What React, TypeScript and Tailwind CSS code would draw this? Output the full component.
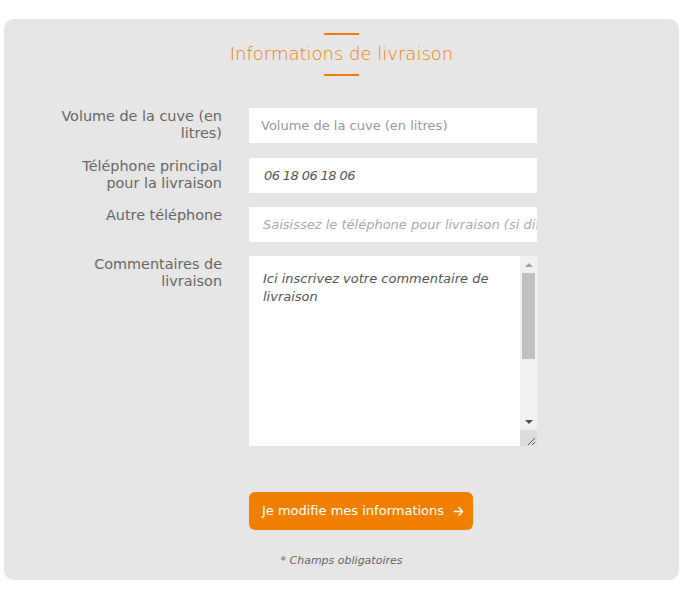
import React from 'react';

const font = { fontFamily: '"DejaVu Sans", sans-serif' };

const Row: React.FC<{ label: string; children: React.ReactNode; className?: string }> = ({ label, children, className }) => (
    <div className={`flex items-start gap-[27px] ${className ?? ''}`}>
        <label className="w-[168px] shrink-0 text-right text-[14.4px] leading-[17px] text-[#666]">{label}</label>
        {children}
    </div>
);

const App: React.FC = () => {
    return (
        <div className="min-h-[590px] bg-white pt-[19px] pl-[4px]" style={font}>
            <div className="w-[675px] h-[561px] rounded-[10px] bg-[#e6e6e6] pt-[14px] pl-[50px]">
                {/* Title */}
                <div className="flex flex-col items-center -ml-[50px]">
                    <div className="w-[35px] h-[2px] bg-[#f07f00]"></div>
                    <h2 className="mt-[7px] text-[18px] leading-[24px] font-light text-[#f07f00]">Informations de livraison</h2>
                    <div className="mt-[8px] w-[35px] h-[2px] bg-[#f07f00]"></div>
                </div>

                <div className="mt-[32px] flex flex-col">
                    <Row label="Volume de la cuve (en litres)">
                        <div className="w-[288px] h-[35px] bg-white px-[12px] flex items-center text-[13px] text-[#999]">
                            Volume de la cuve (en litres)
                        </div>
                    </Row>
                    <Row label="Téléphone principal pour la livraison" className="mt-[15px]">
                        <div className="w-[288px] h-[35px] bg-white px-[15px] flex items-center text-[13px] italic text-[#555] tracking-[-0.6px]">
                            06 18 06 18 06
                        </div>
                    </Row>
                    <Row label="Autre téléphone" className="mt-[14px]">
                        <div className="w-[288px] h-[35px] bg-white pl-[14px] flex items-center text-[13px] italic text-[#aaa] overflow-hidden whitespace-nowrap">
                            Saisissez le téléphone pour livraison (si différent)
                        </div>
                    </Row>
                    <Row label="Commentaires de livraison" className="mt-[14px]">
                        <div className="w-[288px] h-[190px] bg-white flex">
                            <div className="flex-1 pl-[14px] pr-[8px] pt-[14px] text-[13px] leading-[18px] italic text-[#555]">
                                Ici inscrivez votre commentaire de livraison
                            </div>
                            {/* fake scrollbar */}
                            <div className="w-[17px] flex flex-col bg-[#f1f1f1]">
                                <div className="h-[17px] flex items-center justify-center">
                                    <div className="w-0 h-0 border-l-[4px] border-r-[4px] border-b-[4px] border-l-transparent border-r-transparent border-b-[#a3a3a3]"></div>
                                </div>
                                <div className="mx-[2px] h-[86px] bg-[#c1c1c1]"></div>
                                <div className="flex-1"></div>
                                <div className="h-[17px] flex items-center justify-center">
                                    <div className="w-0 h-0 border-l-[4px] border-r-[4px] border-t-[4px] border-l-transparent border-r-transparent border-t-[#505050]"></div>
                                </div>
                                <div className="h-[16px] bg-[#dcdcdc] relative">
                                    <svg width="17" height="16" viewBox="0 0 17 16" className="absolute inset-0">
                                        <line x1="15" y1="8" x2="8" y2="15" stroke="#555" strokeWidth="1" />
                                        <line x1="15" y1="12" x2="12" y2="15" stroke="#555" strokeWidth="1" />
                                    </svg>
                                </div>
                            </div>
                        </div>
                    </Row>
                </div>

                <div className="mt-[46px] pl-[195px]">
                    <button className="w-[224px] h-[38px] rounded-[6px] bg-[#f07f00] text-white text-[13px] flex items-center justify-center gap-[9px] pl-[4px]">
                        Je modifie mes informations
                        <svg width="11" height="11" viewBox="0 0 12 12" fill="none" stroke="white" strokeWidth="1.6" strokeLinecap="round" strokeLinejoin="round">
                            <path d="M1.5 6h9M6.5 2l4 4-4 4" />
                        </svg>
                    </button>
                </div>

                <p className="mt-[23px] -ml-[50px] text-center text-[11px] italic text-[#666]">* Champs obligatoires</p>
            </div>
        </div>
    );
};

export default App;
